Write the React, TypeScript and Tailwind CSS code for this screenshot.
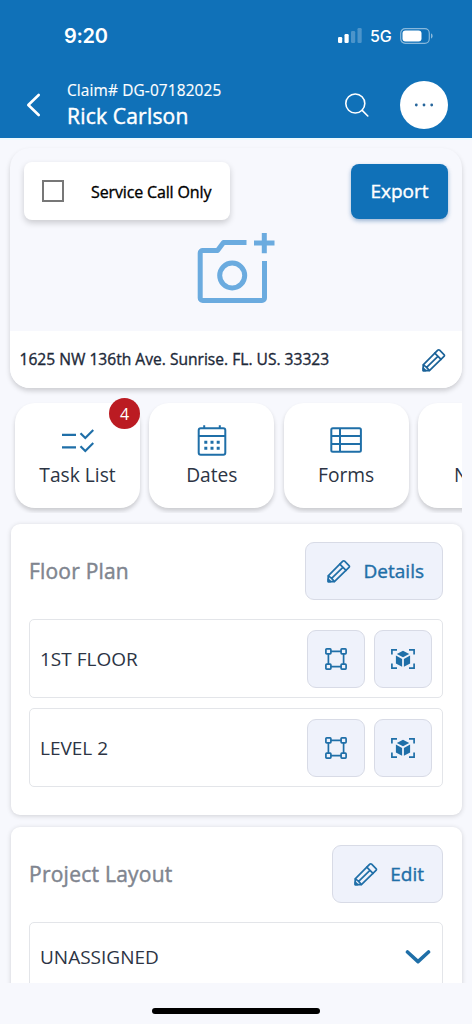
import type { ReactNode } from 'react'

function PencilIcon() {
  return (
    <svg width="24" height="24" viewBox="0 0 24 24" fill="none" stroke="currentColor" strokeWidth="1.7" strokeLinejoin="round" strokeLinecap="round">
      <path d="M1.200 22.600v-5.800L15.800 2.200a1.300 1.300 0 0 1 1.800 0L22 6.600a1.300 1.300 0 0 1 0 1.800L7.400 22.600z" />
      <path d="M12.800 5.200l6.200 6.200M15.900 8.300L4.600 19.400M1.500 16.800l3.100 2.600 2.700 3" />
      <path d="M1.200 20.200v2.400h2.400z" fill="currentColor" />
    </svg>
  )
}

function CameraPlusIcon() {
  return (
    <svg width="78" height="72" viewBox="0 0 78 72" fill="none" stroke="#6babdf" strokeWidth="5" strokeLinejoin="round">
      <path d="M49.500 10.500H26.500L20.500 18.500H5.700a2.500 2.500 0 0 0-2.500 2.500V66a2.500 2.500 0 0 0 2.500 2.500H65a2.500 2.500 0 0 0 2.500-2.500V29" />
      <circle cx="35.200" cy="43.500" r="12.500" />
      <path d="M57 11h20.500M67.300 1v20.200" />
    </svg>
  )
}

function TaskIcon() {
  return (
    <svg width="32" height="32" viewBox="0 0 32 32" fill="none" stroke="currentColor" strokeWidth="2.200">
      <path d="M0 10.800h14M0 23.400h14" />
      <path d="M18.500 9.200l4.800 4.800 8-8M18.500 22.200l4.800 4.800 8-8" />
    </svg>
  )
}

function CalendarIcon() {
  return (
    <svg width="32" height="32" viewBox="0 0 32 32" fill="none" stroke="currentColor" strokeWidth="2">
      <rect x="2.700" y="4.300" width="26.600" height="26.400" rx="2" />
      <path d="M2.700 12h26.600M8.200 1.300v3M23.800 1.300v3" />
      <path d="M8.300 18.200h3M14.500 18.200h3M20.700 18.200h3M8.300 24.200h3M14.500 24.200h3M20.700 24.200h3" strokeWidth="3" />
    </svg>
  )
}

function FormsIcon() {
  return (
    <svg width="32" height="32" viewBox="0 0 32 32" fill="none" stroke="currentColor" strokeWidth="2">
      <rect x="1.300" y="4.300" width="29.600" height="23.500" rx="1.500" />
      <path d="M10 4.300V27.800M1.300 12.100h29.600M1.300 20h29.600" />
    </svg>
  )
}

function PolygonIcon() {
  return (
    <svg width="24" height="24" viewBox="0 0 24 24" fill="none" stroke="currentColor" strokeWidth="1.700">
      <rect x="1.900" y="1.900" width="5" height="5" rx=".8" />
      <rect x="17.100" y="1.900" width="5" height="5" rx=".8" />
      <rect x="1.900" y="17.100" width="5" height="5" rx=".8" />
      <rect x="17.100" y="17.100" width="5" height="5" rx=".8" />
      <path d="M7 4.400h10M7 19.600h10M4.400 7v10M19.600 7v10" />
    </svg>
  )
}

function CubeScanIcon() {
  return (
    <svg width="24" height="24" viewBox="0 0 24 24" fill="currentColor">
      <path d="M.9 7.500V2.800H6M18 2.800h5.100v4.700M.9 16.500v4.700H6M18 21.200h5.100v-4.700" fill="none" stroke="currentColor" strokeWidth="1.700" />
      <path d="M12 3.700l6.200 3.200L12 10.300 5.800 6.900z" />
      <path d="M4.900 8.600l6.200 3.300v7.800l-6.200-3.300zM19.100 8.600l-6.200 3.300v7.800l6.200-3.300z" />
    </svg>
  )
}

function StatusBar() {
  return (
    <div className="flex h-[72px] items-center justify-between pl-16 pr-[39px] font-['Inter',sans-serif] text-white">
      <span className="text-[20px] font-semibold tracking-[-0.3px]">9:20</span>
      <div className="flex items-center">
        <svg width="24" height="16" viewBox="0 0 24 16" fill="#fff">
          <rect x="0" y="9" width="4.200" height="6" rx="1.200" />
          <rect x="6.500" y="6" width="4.200" height="9" rx="1.200" />
          <rect x="13" y="3" width="4.200" height="12" rx="1.200" opacity=".25" />
          <rect x="19.500" y="0" width="4.200" height="15" rx="1.200" opacity=".25" />
        </svg>
        <span className="ml-2 w-[30px] text-[16px] font-medium tracking-[-0.2px]">5G</span>
        <svg width="33" height="16" viewBox="0 0 33 16">
          <rect x=".7" y=".7" width="28.600" height="14.600" rx="4.500" fill="none" stroke="#fff" strokeOpacity=".5" strokeWidth="1.200" />
          <rect x="2.500" y="2.600" width="19" height="10.800" rx="3" fill="#fff" />
          <path d="M31 5.500v5c1-.3 1.600-1.200 1.600-2.500s-.6-2.200-1.600-2.500z" fill="#fff" opacity=".5" />
        </svg>
      </div>
    </div>
  )
}

function Header() {
  return (
    <header className="h-[138px] shrink-0 bg-[#1071b8]">
      <StatusBar />
      <div className="flex h-[66px] items-center pl-[26px] pr-6 text-white">
        <svg width="16" height="24" viewBox="0 0 16 24" fill="none" stroke="currentColor" strokeWidth="2.600" strokeLinecap="round" strokeLinejoin="round">
          <path d="M12.700 2L2.300 12l10.400 10" />
        </svg>
        <div className="ml-[25px] flex-1 pt-[2px]">
          <div className="text-[15.400px] leading-5 tracking-[0.14px] [-webkit-text-stroke:0.15px]">Claim# DG-07182025</div>
          <div className="text-[21px] leading-[30px] tracking-[0.2px] [-webkit-text-stroke:0.45px]">Rick Carlson</div>
        </div>
        <svg width="26" height="26" viewBox="0 0 26 26" fill="none" stroke="currentColor" strokeWidth="1.600" strokeLinecap="round">
          <circle cx="11.300" cy="11.500" r="9.500" />
          <path d="M18.200 18.400l5.600 5.600" />
        </svg>
        <button className="ml-[30px] flex size-12 items-center justify-center rounded-full bg-white">
          <svg width="20" height="4" viewBox="0 0 20 4" fill="#26659b">
            <circle cx="2.300" cy="2" r="1.400" />
            <circle cx="10" cy="2" r="1.400" />
            <circle cx="17.700" cy="2" r="1.400" />
          </svg>
        </button>
      </div>
    </header>
  )
}

function PropertyCard() {
  return (
    <section className="mx-[10px] h-[240px] rounded-[20px] bg-[#f7f8fd] shadow-[0_3px_5px_rgba(0,0,0,0.17)]">
      <div className="flex h-[183px] flex-col">
        <div className="flex items-start justify-between pl-[14px] pr-[14px] pt-[14px]">
          <label className="flex h-[58px] w-[206px] items-center rounded-lg bg-white pl-[18px] shadow-[0_3px_6px_rgba(0,0,0,0.18)]">
            <span className="size-[22px] border-2 border-[#777]" />
            <span className="ml-[27px] whitespace-nowrap pt-px text-[16px] tracking-[-0.14px] text-black [-webkit-text-stroke:0.35px]">Service Call Only</span>
          </label>
          <button className="mt-[2px] h-[55px] w-[97px] rounded-lg bg-[#1071b8] text-[19px] text-white shadow-[0_2px_4px_rgba(16,80,150,0.4)] [-webkit-text-stroke:0.4px]">
            Export
          </button>
        </div>
        <div className="ml-[186.500px] mt-3">
          <CameraPlusIcon />
        </div>
      </div>
      <div className="flex h-[57px] items-center justify-between rounded-b-[20px] bg-white pl-[9.500px] pr-4 text-[#1d2939]">
        <span className="pt-px text-[15.600px] [-webkit-text-stroke:0.35px]">1625 NW 136th Ave. Sunrise. FL. US. 33323</span>
        <span className="text-[#1b6298]">
          <PencilIcon />
        </span>
      </div>
    </section>
  )
}

function Tile({ icon, label, badge }: { icon?: ReactNode; label: string; badge?: number }) {
  return (
    <div className="relative flex h-[105px] w-[125px] shrink-0 flex-col items-center rounded-[20px] bg-white pt-[21px] text-[#1f6fa8] shadow-[0_3px_4px_rgba(0,0,0,0.18)]">
      <div className="size-8">{icon}</div>
      <div className="mt-[5px] whitespace-nowrap text-[19.200px] leading-7 text-[#2c3444]">{label}</div>
      {badge && (
        <span className="absolute -top-[5px] right-0 flex size-[31px] items-center justify-center rounded-full bg-[#bb1b22] text-[16px] text-white">
          {badge}
        </span>
      )}
    </div>
  )
}

function OutlineButton({ label, className }: { label: string; className: string }) {
  return (
    <button className={`flex h-[58px] items-center justify-between rounded-[9px] border border-[#d8dbe6] bg-[#eff2fb] pl-[21px] pr-[18px] text-[19px] text-[#1f6fa8] [-webkit-text-stroke:0.4px] ${className}`}>
      <PencilIcon />
      {label}
    </button>
  )
}

function IconButton({ children }: { children: ReactNode }) {
  return (
    <button className="flex size-[58px] items-center justify-center rounded-[9px] border border-[#d8dbe6] bg-[#eff2fb] text-[#1f6fa8]">
      {children}
    </button>
  )
}

const floors = ['1ST FLOOR', 'LEVEL 2']

export default function App() {
  return (
    <div className="flex h-[1024px] w-[472px] flex-col overflow-hidden bg-[#f7f8fd] font-['Open_Sans','Noto_Sans',sans-serif]">
      <Header />

      <main className="h-[845px] shrink-0 overflow-hidden border-t-2 border-[#eefaff] pt-2">
        <PropertyCard />

        {/* Shortcut tiles, scroll off to the right */}
        <div className="mx-[10px] mt-[5px] flex h-[120px] gap-[9.300px] overflow-hidden pl-[5px] pt-[10px]">
          <Tile icon={<TaskIcon />} label="Task List" badge={4} />
          <Tile icon={<CalendarIcon />} label="Dates" />
          <Tile icon={<FormsIcon />} label="Forms" />
          <Tile label="Notes" />
        </div>

        <section className="ml-[11px] mr-[10px] mt-[11px] h-[291px] rounded-[9px] bg-white pl-[18px] pr-[19px] pt-[18px] shadow-[0_1px_5px_rgba(0,0,0,0.16)]">
          <div className="flex items-center justify-between">
            <h2 className="pt-[2px] text-[21px] tracking-[0.2px] text-[#80858f] [-webkit-text-stroke:0.45px]">Floor Plan</h2>
            <OutlineButton label="Details" className="w-[138px]" />
          </div>
          <div className="mt-[19px] flex flex-col gap-[10px]">
            {floors.map((floor) => (
              <div key={floor} className="flex h-[79px] items-center rounded-[5px] border border-[#e3e5e9] pl-[10px] pr-[10px]">
                <span className="flex-1 pt-px text-[19px] text-[#2c3444]">{floor}</span>
                <div className="flex gap-[9px]">
                  <IconButton>
                    <PolygonIcon />
                  </IconButton>
                  <IconButton>
                    <CubeScanIcon />
                  </IconButton>
                </div>
              </div>
            ))}
          </div>
        </section>

        <section className="ml-[11px] mr-[10px] mt-3 h-[300px] rounded-[9px] bg-white pl-[18px] pr-[19px] pt-[18px] shadow-[0_1px_5px_rgba(0,0,0,0.16)]">
          <div className="flex items-center justify-between">
            <h2 className="pt-[2px] text-[21px] tracking-[0.25px] text-[#80858f] [-webkit-text-stroke:0.45px]">Project Layout</h2>
            <OutlineButton label="Edit" className="w-[111px]" />
          </div>
          <div className="mt-[19px] flex h-[90px] items-start justify-between rounded-[5px] border border-[#e3e5e9] pl-[10px] pr-[11px] pt-[20px]">
            <span className="text-[19px] text-[#2c3444]">UNASSIGNED</span>
            <svg className="mt-[6px]" width="26" height="16" viewBox="0 0 26 16" fill="none" stroke="#1f6fa8" strokeWidth="3.600" strokeLinecap="round" strokeLinejoin="round">
              <path d="M2.500 3L13 12.600 23.500 3" />
            </svg>
          </div>
        </section>
      </main>

      <footer className="flex flex-1 justify-center pt-[25px]">
        <div className="h-[6px] w-[168px] rounded-full bg-black" />
      </footer>
    </div>
  )
}
